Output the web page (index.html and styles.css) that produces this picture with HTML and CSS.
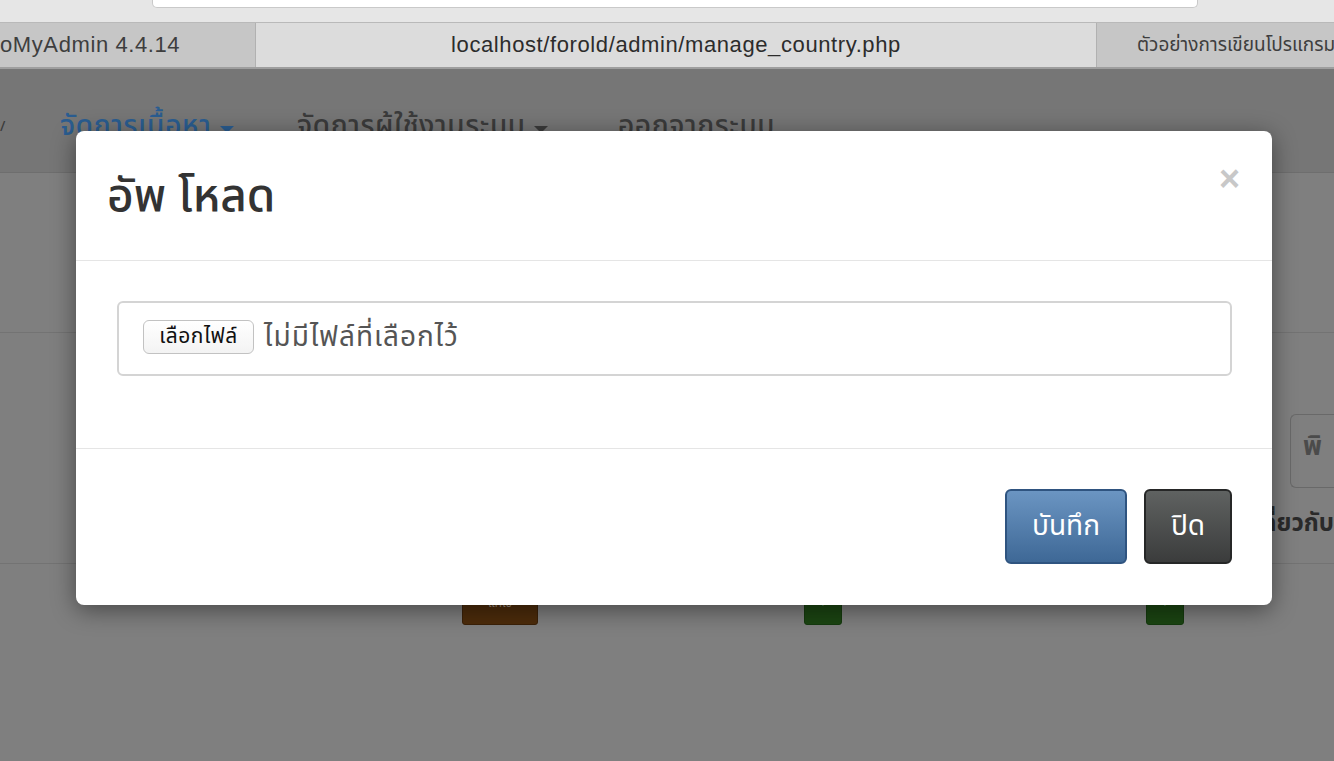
FILE: index.html
```html
<!DOCTYPE html>
<html lang="th">
<head>
<meta charset="utf-8">
<title>manage_country</title>
<link rel="stylesheet" href="styles.css">
</head>
<body>
<div class="browser">
  <div class="toolbar"><div class="address"></div></div>
  <div class="tabs">
    <div class="tab tab-left">oMyAdmin 4.4.14</div>
    <div class="tab tab-active">localhost/forold/admin/manage_country.php</div>
    <div class="tab tab-right">ตัวอย่างการเขียนโปรแกรม</div>
  </div>
</div>
<div class="page">
  <div class="navbar">
    <span class="nav-tick">/</span>
    <span class="nav-item nav-blue nav-w1">จัดการเนื้อหา <span class="caret"></span></span>
    <span class="nav-item nav-w2">จัดการผู้ใช้งานระบบ <span class="caret"></span></span>
    <span class="nav-item">ออกจากระบบ</span>
  </div>
  <div class="band band-1"></div>
  <div class="band band-2">
    <div class="side-tools">
      <div class="search-box">พิ</div>
      <div class="side-label">เกี่ยวกับ</div>
    </div>
  </div>
  <div class="band band-3">
    <span class="tbtn tbtn-brown">แก้ไข</span>
    <span class="tbtn tbtn-green">+</span>
    <span class="tbtn tbtn-green">+</span>
  </div>
</div>

<div class="modal">
  <div class="modal-header">
    <h4 class="modal-title">อัพ โหลด</h4>
    <span class="close">&times;</span>
  </div>
  <div class="modal-body">
    <div class="file-input">
      <span class="file-btn">เลือกไฟล์</span>
      <span class="file-none">ไม่มีไฟล์ที่เลือกไว้</span>
    </div>
  </div>
  <div class="modal-footer">
    <span class="btn btn-primary">บันทึก</span>
    <span class="btn btn-dark">ปิด</span>
  </div>
</div>
</body>
</html>
```

FILE: styles.css
```css
* { box-sizing: border-box; }
html, body { margin: 0; padding: 0; }
body {
  width: 1334px;
  height: 761px;
  overflow: hidden;
  position: relative;
  font-family: "Noto Sans Thai", "Noto Sans", "Liberation Sans", sans-serif;
  background: #7f7f7f;
}

.browser { background: #e6e6e6; }
.toolbar { height: 22px; position: relative; }
.address {
  margin-left: 152px;
  width: 1046px;
  height: 8px;
  background: #fff;
  border: 1px solid #c9c9c9;
  border-top: none;
  border-radius: 0 0 5px 5px;
}
.tabs {
  display: flex;
  height: 47px;
  border-top: 1px solid #b9b9b9;
  border-bottom: 2px solid #9e9e9e;
  font-family: "Liberation Sans", "Noto Sans Thai", sans-serif;
  font-size: 22px;
  letter-spacing: 0.6px;
  color: #2c2c2c;
}
.tab {
  display: flex;
  align-items: center;
  overflow: hidden;
  white-space: nowrap;
}
.tab-left {
  width: 256px;
  background: #c6c6c6;
  color: #3e3e3e;
  border-right: 1px solid #b1b1b1;
}
.tab-active {
  width: 840px;
  background: #dcdcdc;
  justify-content: center;
}
.tab-right {
  flex: 1;
  background: #c6c6c6;
  color: #3e3e3e;
  border-left: 1px solid #b1b1b1;
  padding-left: 40px;
  font-family: "Noto Sans Thai", "Liberation Sans", sans-serif;
  font-size: 19px;
  letter-spacing: 0;
}

.page { height: 692px; }
.navbar {
  height: 104px;
  background: #767676;
  border-bottom: 1px solid #6e6e6e;
  display: flex;
  align-items: center;
  padding-top: 12px;
  font-size: 28px;
  letter-spacing: 0.6px;
  font-weight: 500;
  color: #3b3b3b;
}
.nav-tick { width: 60px; color: #3b3b3b; font-size: 14px; }
.nav-item { display: inline-flex; align-items: center; gap: 8px; white-space: nowrap; }
.nav-w1 { width: 237px; }
.nav-w2 { width: 321px; }
.nav-blue { color: #2a5d91; }
.caret {
  width: 0; height: 0;
  border-left: 7px solid transparent;
  border-right: 7px solid transparent;
  border-top: 7px solid currentColor;
  margin-top: 6px;
}
.band { border-bottom: 1px solid #737373; }
.band-1 { height: 160px; background: #7f7f7f; }
.band-2 {
  height: 231px;
  display: flex;
  justify-content: flex-end;
  align-items: flex-start;
}
.side-tools { width: 44px; padding-top: 81px; display: flex; flex-direction: column; align-items: flex-end; }
.search-box {
  width: 44px;
  height: 74px;
  border: 1px solid #696969;
  border-right: none;
  border-radius: 6px 0 0 6px;
  font-size: 26px;
  font-weight: bold;
  color: #4b4b4b;
  padding: 12px 0 0 12px;
}
.side-label {
  margin-top: 18px;
  font-size: 24px;
  font-weight: bold;
  color: #2a2a2a;
  white-space: nowrap;
}
.band-3 { height: 196px; position: relative; border-bottom: none; }
.tbtn {
  position: absolute;
  top: 29px;
  height: 32px;
  border-radius: 3px;
  font-size: 12px;
  color: #9a8a7a;
  text-align: center;
  line-height: 18px;
}
.tbtn-brown { left: 462px; width: 76px; background: #4d2c0b; border: 1px solid #3b2108; }
.tbtn-green { width: 38px; background: #1b4512; border: 1px solid #153a0e; color: #6a8a6a; }
.tbtn-green:nth-child(2) { left: 804px; }
.tbtn-green:nth-child(3) { left: 1146px; }

.modal {
  position: absolute;
  left: 76px;
  top: 131px;
  width: 1196px;
  height: 474px;
  background: #fff;
  border-radius: 8px;
  box-shadow: 0 5px 24px rgba(0,0,0,0.45);
  display: flex;
  flex-direction: column;
}
.modal-header {
  height: 130px;
  border-bottom: 1px solid #e5e5e5;
  padding: 38px 31px 0 31px;
  display: flex;
  justify-content: space-between;
  align-items: flex-start;
}
.modal-title {
  margin: 0;
  font-size: 46px;
  font-weight: 500;
  color: #333;
  line-height: 56px;
}
.close {
  font-family: "Liberation Sans", sans-serif;
  font-size: 36px;
  font-weight: bold;
  color: #c8c8c8;
  line-height: 22px;
  margin-top: -1px;
  margin-right: 1px;
}
.modal-body {
  height: 188px;
  border-bottom: 1px solid #e5e5e5;
  padding: 40px 40px 0 41px;
}
.file-input {
  height: 75px;
  border: 2px solid #d4d4d4;
  border-radius: 6px;
  display: flex;
  align-items: center;
  padding-left: 24px;
  padding-bottom: 3px;
  gap: 10px;
}
.file-btn {
  height: 34px;
  width: 111px;
  text-align: center;
  background: linear-gradient(#ffffff, #f3f3f3);
  border: 1px solid #c2c2c2;
  border-radius: 6px;
  font-size: 21px;
  line-height: 32px;
  color: #111;
  letter-spacing: 0.5px;
}
.file-none { font-size: 28px; color: #555; letter-spacing: 1px; }
.modal-footer {
  flex: 1;
  padding: 40px 40px 0 0;
  display: flex;
  justify-content: flex-end;
  align-items: flex-start;
  gap: 17px;
}
.btn {
  height: 75px;
  border-radius: 6px;
  font-size: 28px;
  color: #fff;
  display: flex;
  align-items: center;
  justify-content: center;
}
.btn-primary {
  width: 122px;
  background: linear-gradient(#6b95c2, #3e6896);
  border: 2px solid #2f5480;
}
.btn-dark {
  width: 88px;
  background: linear-gradient(#5f6261, #3b3c3c);
  border: 2px solid #262727;
}
```
